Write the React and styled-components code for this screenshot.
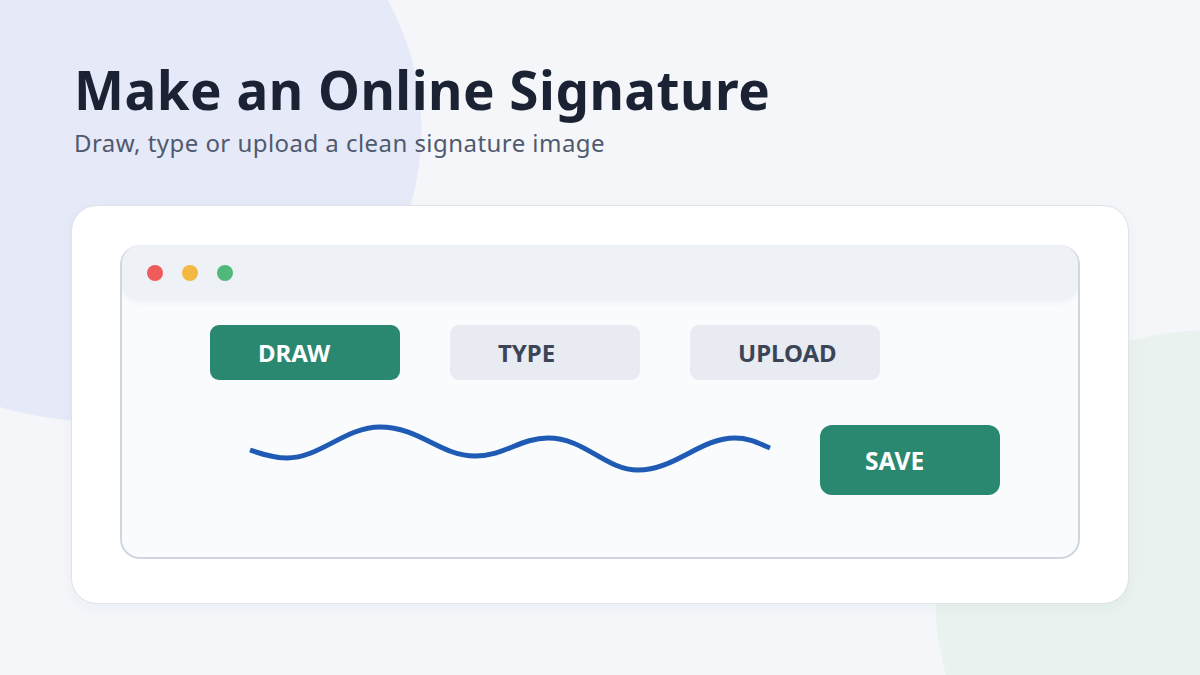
import React, { useState } from 'react';
import styled, { createGlobalStyle } from 'styled-components';

const GlobalStyle = createGlobalStyle`
  html, body {
    margin: 0;
    padding: 0;
  }
  body {
    font-family: 'Noto Sans', 'Open Sans', sans-serif;
    background: #f4f6fa;
  }
`;

const TABS = ['DRAW', 'TYPE', 'UPLOAD'];

const WAVE =
  'M5 30 C 20 35, 30 38, 42 38 C 75 38, 100 7, 135 7 C 175 7, 195 36, 230 36 ' +
  'C 260 36, 275 18, 303 18 C 340 18, 360 50, 393 50 C 430 50, 455 18, 490 18 ' +
  'C 505 18, 515 24, 525 28';

export default function App() {
  const [mode, setMode] = useState('DRAW');

  return (
    <Page>
      <GlobalStyle />
      <Title>Make an Online Signature</Title>
      <Subtitle>Draw, type or upload a clean signature image</Subtitle>

      <Card>
        <Window>
          <TitleBar>
            <Dot color='#ef5b5b' />
            <Dot color='#f4b942' />
            <Dot color='#4fb87a' />
          </TitleBar>
          <Body>
            <Tabs>
              {TABS.map((t) => (
                <Tab key={t} active={t === mode} onClick={() => setMode(t)}>
                  {t}
                </Tab>
              ))}
            </Tabs>
            <DrawRow>
              <Pad viewBox='0 0 530 70' width='530' height='70'>
                <path
                  d={WAVE}
                  fill='none'
                  stroke='#1f5ab4'
                  strokeWidth='5'
                  strokeLinecap='butt'
                />
              </Pad>
              <SaveButton>SAVE</SaveButton>
            </DrawRow>
          </Body>
        </Window>
      </Card>
    </Page>
  );
}

const Page = styled.div`
  width: 1200px;
  height: 675px;
  box-sizing: border-box;
  overflow: hidden;
  padding: 60px 71px 0 71px;
  background:
    radial-gradient(ellipse 322px 292px at 100px 130px, #e6e9f8 99.6%, transparent 100%),
    radial-gradient(circle 270px at 1205px 600px, #e9f2ee 99.6%, transparent 100%),
    #f4f6fa;
`;

const Title = styled.h1`
  margin: 0 0 0 3px;
  font-size: 53px;
  line-height: 60px;
  font-weight: 700;
  color: #1a2233;
  letter-spacing: 0.5px;
`;

const Subtitle = styled.p`
  margin: 7px 0 0 3px;
  font-size: 24px;
  line-height: 32px;
  font-weight: 400;
  color: #4f5a6e;
  letter-spacing: 0.45px;
`;

const Card = styled.div`
  margin-top: 46px;
  width: 1058px;
  height: 399px;
  box-sizing: border-box;
  padding: 39px 48px 0 48px;
  background: #fff;
  border: 1px solid #dde2eb;
  border-radius: 26px;
  box-shadow: 0 4px 14px rgba(30, 40, 70, 0.04);
`;

const Window = styled.div`
  height: 314px;
  box-sizing: border-box;
  background: #f9fbfd;
  border: 2px solid #cfd6e2;
  border-top: none;
  border-radius: 20px;
  overflow: hidden;
`;

const TitleBar = styled.div`
  height: 55px;
  margin: 0 -2px;
  display: flex;
  align-items: center;
  gap: 19px;
  padding-left: 27px;
  background: #eef1f6;
  border-radius: 20px;
  box-shadow: 0 3px 6px rgba(30, 40, 70, 0.04);
`;

const Dot = styled.span`
  width: 16px;
  height: 16px;
  border-radius: 50%;
  background: ${(p) => p.color};
`;

const Body = styled.div`
  padding: 25px 0 0 88px;
`;

const Tabs = styled.div`
  display: flex;
  gap: 50px;
`;

const Tab = styled.button`
  width: 190px;
  height: 55px;
  padding: 0 0 0 48px;
  border: none;
  border-radius: 9px;
  text-align: left;
  font-family: 'Noto Sans', 'Open Sans', sans-serif;
  font-size: 24px;
  font-weight: 700;
  cursor: pointer;
  background: ${(p) => (p.active ? '#2a8870' : '#e8ebf2')};
  color: ${(p) => (p.active ? '#ffffff' : '#3c4558')};
`;

const DrawRow = styled.div`
  margin-top: 45px;
  display: flex;
  align-items: flex-start;
`;

const Pad = styled.svg`
  display: block;
  margin-left: 35px;
  margin-top: -5px;
`;

const SaveButton = styled.button`
  margin-left: 45px;
  width: 180px;
  height: 70px;
  padding: 0 0 0 45px;
  border: none;
  border-radius: 12px;
  text-align: left;
  font-family: 'Noto Sans', 'Open Sans', sans-serif;
  font-size: 24.5px;
  font-weight: 700;
  color: #fff;
  background: #2a8870;
  cursor: pointer;
`;
